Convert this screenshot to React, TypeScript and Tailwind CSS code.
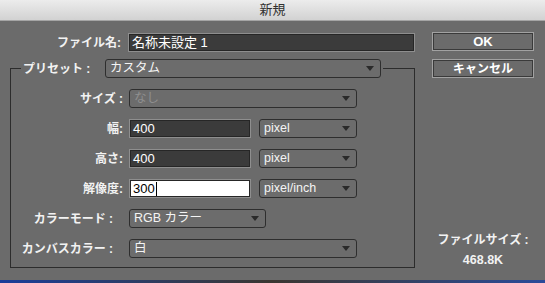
import React from "react";

const font = { fontFamily: '"Liberation Sans", "Noto Sans CJK JP", sans-serif' };

function Arrow() {
  return (
    <svg width="8" height="5" viewBox="0 0 8 5" className="ml-auto shrink-0">
      <path d="M0 0 L8 0 L4 5 Z" fill="#2a2a2a" />
    </svg>
  );
}

function Select({ value, w, dim }: { value: string; w: string; dim?: boolean }) {
  return (
    <div
      className={`${w} h-[19px] flex items-center rounded-[3px] border border-[#2e2e2e] bg-[#6c6c6c] pl-[4px] pr-[6px] text-[12.5px] leading-none ${
        dim ? "text-[#8f8f8f]" : "text-[#f4f4f4]"
      }`}
    >
      <span>{value}</span>
      <Arrow />
    </div>
  );
}

function Field({ value, w, light }: { value: string; w: string; light?: boolean }) {
  return (
    <div
      className={`${w} h-[19px] flex items-center border border-[#8e8e8e] shadow-[inset_0_0_0_1px_#262626] pl-[3px] text-[13px] leading-none ${
        light ? "bg-white text-black" : "bg-[#3b3b3b] text-white"
      }`}
    >
      <span>{value}</span>
      {light ? <span className="ml-[1px] h-[14px] w-[1px] bg-black" /> : null}
    </div>
  );
}

function Row({ label, children, pr }: { label: string; children: React.ReactNode; pr?: string }) {
  return (
    <div className="flex items-center h-[19px]">
      <div className={`w-[112px] text-right text-[12px] font-bold text-[#f2f2f2] leading-none ${pr || ""}`}>
        {label}
      </div>
      <div className="ml-[6px] flex items-center gap-[8px]">{children}</div>
    </div>
  );
}

export default function App() {
  return (
    <div style={font} className="w-[545px] h-[283px] flex flex-col bg-[#6b6b6b] overflow-hidden">
      <div className="h-[21px] shrink-0 flex items-center justify-center bg-gradient-to-b from-[#ececec] to-[#d2d2d2] border-b border-[#a5a5a5] text-[13px] text-[#303030]">
        新規
      </div>
      <div className="flex flex-1">
        <div className="w-[415px] shrink-0 pl-[10px]">
          <div className="mt-[12px] flex items-center h-[19px]">
            <div className="w-[113px] text-right text-[12px] font-bold text-[#f2f2f2] leading-none pr-[2px]">
              ファイル名:
            </div>
            <div className="ml-[5px]">
              <Field value="名称未設定 1" w="w-[287px]" />
            </div>
          </div>
          <fieldset className="mt-[7px] w-[405px] border border-[#2c2c2c] px-0 pb-[9px]">
            <legend className="ml-[10px] px-[2px] flex items-center">
              <span className="text-[12px] font-bold text-[#f2f2f2] w-[82px] leading-none">プリセット :</span>
              <Select value="カスタム" w="w-[276px]" />
            </legend>
            <div className="mt-[11px] flex flex-col gap-[11px]">
              <Row label="サイズ :">
                <Select value="なし" w="w-[228px]" dim />
              </Row>
              <Row label="幅:">
                <Field value="400" w="w-[122px]" />
                <Select value="pixel" w="w-[98px]" />
              </Row>
              <Row label="高さ:">
                <Field value="400" w="w-[122px]" />
                <Select value="pixel" w="w-[98px]" />
              </Row>
              <Row label="解像度:">
                <Field value="300" w="w-[122px]" light />
                <Select value="pixel/inch" w="w-[98px]" />
              </Row>
              <Row label="カラーモード :" pr="pr-[10px]">
                <Select value="RGB カラー" w="w-[137px]" />
              </Row>
              <Row label="カンバスカラー :" pr="pr-[10px]">
                <Select value="白" w="w-[228px]" />
              </Row>
            </div>
          </fieldset>
        </div>
        <div className="ml-[17px] w-[102px] flex flex-col">
          <div className="mt-[11px] h-[19px] flex items-center justify-center border border-[#a2a2a2] shadow-[inset_0_0_0_1px_#3a3a3a] text-[13px] font-bold text-white leading-none">
            OK
          </div>
          <div className="mt-[8px] h-[19px] flex items-center justify-center border border-[#a2a2a2] shadow-[inset_0_0_0_1px_#3a3a3a] text-[12px] font-bold text-white leading-none">
            キャンセル
          </div>
          <div className="mt-[156px] text-center text-[12px] font-bold text-[#f2f2f2] leading-none">ファイルサイズ :</div>
          <div className="mt-[8px] text-center text-[12.5px] font-bold text-[#f2f2f2] leading-none">468.8K</div>
        </div>
      </div>
      <div className="h-[3px] shrink-0 bg-gradient-to-r from-[#1a3c9a] via-[#3a3530] to-[#2a4a9a]" />
    </div>
  );
}
